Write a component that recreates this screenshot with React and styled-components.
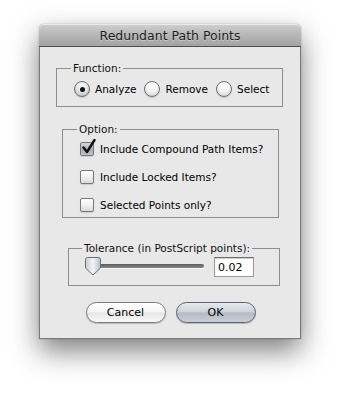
import React from 'react';
import styled, { createGlobalStyle } from 'styled-components';

const GlobalStyle = createGlobalStyle`
  html, body {
    margin: 0;
    padding: 0;
    background: #ffffff;
  }
  body {
    font-family: "DejaVu Sans", "Liberation Sans", sans-serif;
    font-size: 10.5px;
    color: #000;
  }
`;

const Stage = styled.div`
  width: 340px;
  height: 393px;
  padding: 24px 0 0 39px;
  box-sizing: border-box;
  overflow: hidden;
`;

const Window = styled.div`
  width: 262px;
  background: #e8e8e8;
  border: 1px solid #7b7b7b;
  border-top: none;
  border-radius: 5px 5px 0 0;
  box-sizing: border-box;
  box-shadow: 0 12px 28px rgba(0, 0, 0, 0.5), 0 0 2px rgba(0, 0, 0, 0.25);
  display: flex;
  flex-direction: column;
`;

const TitleBar = styled.div`
  height: 22px;
  margin: 0 -1px;
  border-radius: 5px 5px 0 0;
  background: linear-gradient(#d0d0d0, #b9b9b9 45%, #a3a3a3);
  border-bottom: 1px solid #4e4e4e;
  box-shadow: inset 0 1px 0 rgba(255, 255, 255, 0.6);
  display: flex;
  align-items: center;
  justify-content: center;
  font-size: 12.5px;
  color: #1e1e1e;
  text-shadow: 0 1px 0 rgba(255, 255, 255, 0.35);
`;

const Body = styled.div`
  padding: 14px 0 15px;
  display: flex;
  flex-direction: column;
`;

const Group = styled.fieldset`
  margin: ${(p) => p.$top}px ${(p) => p.$right}px 0 ${(p) => p.$left}px;
  padding: ${(p) => p.$pad};
  border: 1px solid #8e8e8e;
  border-radius: 0;
  min-width: 0;
`;

const Legend = styled.legend`
  padding: 0 2px;
  margin-left: ${(p) => p.$shift}px;
  line-height: 14px;
  color: #111;
  white-space: nowrap;
`;

const RadioRow = styled.div`
  display: flex;
  align-items: center;
  gap: 8px;
  padding-top: 6px;
`;

const Choice = styled.label`
  display: flex;
  align-items: center;
  gap: 5px;
  line-height: 16px;
  white-space: nowrap;
`;

const RadioCircle = styled.span`
  width: 14px;
  height: 14px;
  border-radius: 50%;
  border: 1px solid #6f6f6f;
  background: ${(p) =>
    p.$on
      ? 'radial-gradient(circle at 50% 30%, #ffffff 0%, #e2e5ea 45%, #aeb3bb 100%)'
      : 'radial-gradient(circle at 50% 25%, #ffffff 0%, #f2f2f2 50%, #c9c9c9 100%)'};
  box-shadow: 0 1px 1px rgba(0, 0, 0, 0.15);
  display: flex;
  align-items: center;
  justify-content: center;
  flex: none;
  &::after {
    content: '';
    display: ${(p) => (p.$on ? 'block' : 'none')};
    width: 5px;
    height: 5px;
    border-radius: 50%;
    background: #111;
  }
`;

const CheckList = styled.div`
  display: flex;
  flex-direction: column;
  gap: 14px;
`;

const CheckRow = styled.label`
  display: flex;
  align-items: center;
  gap: 6px;
  line-height: 14px;
  white-space: nowrap;
`;

const CheckBox = styled.span`
  position: relative;
  width: 12px;
  height: 12px;
  border: 1px solid #787878;
  border-radius: 2px;
  flex: none;
  background: ${(p) =>
    p.$on
      ? 'linear-gradient(#d4d8de, #a9afb8 55%, #bcc2ca)'
      : 'linear-gradient(#ffffff, #f1f1f1 50%, #dadada)'};
  box-shadow: 0 1px 1px rgba(0, 0, 0, 0.12);
  svg {
    position: absolute;
    left: 1px;
    top: -4px;
  }
`;

const SliderRow = styled.div`
  display: flex;
  align-items: center;
  padding-top: 2px;
`;

const Track = styled.div`
  position: relative;
  width: 118px;
  height: 4px;
  border-radius: 2px;
  background: linear-gradient(#5a5a5a, #8a8a8a);
  box-shadow: 0 1px 0 rgba(255, 255, 255, 0.7);
  margin-top: -2px;
  svg {
    position: absolute;
    left: -1px;
    top: -7px;
  }
`;

const ValueField = styled.div`
  margin-left: 10px;
  width: 40px;
  height: 20px;
  box-sizing: border-box;
  border: 1px solid #9b9b9b;
  border-top-color: #6e6e6e;
  background: #fff;
  box-shadow: inset 0 1px 1px rgba(0, 0, 0, 0.2);
  padding: 0 3px;
  display: flex;
  align-items: center;
  font-size: 11px;
`;

const ButtonRow = styled.div`
  display: flex;
  justify-content: center;
  gap: 10px;
  margin-top: 16px;
  padding-left: 1px;
`;

const PushButton = styled.button`
  width: 80px;
  height: 21px;
  border-radius: 11px;
  border: 1px solid ${(p) => (p.$primary ? '#5a6270' : '#7a7a7a')};
  background: ${(p) =>
    p.$primary
      ? 'linear-gradient(#e6e9ee 0%, #cfd4dc 45%, #b4bbc6 52%, #c9ced7 100%)'
      : 'linear-gradient(#ffffff 0%, #f6f6f6 45%, #e6e6e6 52%, #f9f9f9 100%)'};
  box-shadow: 0 1px 1px rgba(0, 0, 0, 0.2);
  font-family: "DejaVu Sans", "Liberation Sans", sans-serif;
  font-size: 11px;
  color: #000;
  padding: 0;
`;

function Radio({ on, children }) {
  return (
    <Choice>
      <RadioCircle $on={on} />
      {children}
    </Choice>
  );
}

function Check({ on, children }) {
  return (
    <CheckRow>
      <CheckBox $on={on}>
        {on && (
          <svg width="14" height="15" viewBox="0 0 14 15">
            <path
              d="M1.5 8.5 L5 13 L12.5 1"
              fill="none"
              stroke="#111"
              strokeWidth="2.4"
              strokeLinecap="round"
              strokeLinejoin="round"
            />
          </svg>
        )}
      </CheckBox>
      {children}
    </CheckRow>
  );
}

function Thumb() {
  return (
    <svg width="16" height="19" viewBox="0 0 16 19">
      <defs>
        <linearGradient id="thumbFill" x1="0" x2="1" y1="0" y2="0">
          <stop offset="0" stopColor="#c7ccd4" />
          <stop offset="0.5" stopColor="#f4f5f7" />
          <stop offset="1" stopColor="#b5bbc4" />
        </linearGradient>
      </defs>
      <path
        d="M2.5 0.5 H13.5 Q15.5 0.5 15.5 2.5 V11 L8 18 L0.5 11 V2.5 Q0.5 0.5 2.5 0.5 Z"
        fill="url(#thumbFill)"
        stroke="#6c6f75"
        strokeWidth="1"
      />
    </svg>
  );
}

export default function App() {
  return (
    <>
      <GlobalStyle />
      <Stage>
        <Window>
          <TitleBar>Redundant Path Points</TitleBar>
          <Body>
            <Group $top={0} $left={16} $right={17} $pad="0 8px 9px 17px">
              <Legend $shift={-3}>Function:</Legend>
              <RadioRow>
                <Radio on>Analyze</Radio>
                <Radio>Remove</Radio>
                <Radio>Select</Radio>
              </RadioRow>
            </Group>

            <Group $top={15} $left={22} $right={21} $pad="6px 8px 5px 17px">
              <Legend $shift={-3}>Option:</Legend>
              <CheckList>
                <Check on>Include Compound Path Items?</Check>
                <Check>Include Locked Items?</Check>
                <Check>Selected Points only?</Check>
              </CheckList>
            </Group>

            <Group $top={23} $left={28} $right={20} $pad="0 8px 8px 17px">
              <Legend $shift={-4}>Tolerance (in PostScript points):</Legend>
              <SliderRow>
                <Track>
                  <Thumb />
                </Track>
                <ValueField>0.02</ValueField>
              </SliderRow>
            </Group>

            <ButtonRow>
              <PushButton>Cancel</PushButton>
              <PushButton $primary>OK</PushButton>
            </ButtonRow>
          </Body>
        </Window>
      </Stage>
    </>
  );
}
